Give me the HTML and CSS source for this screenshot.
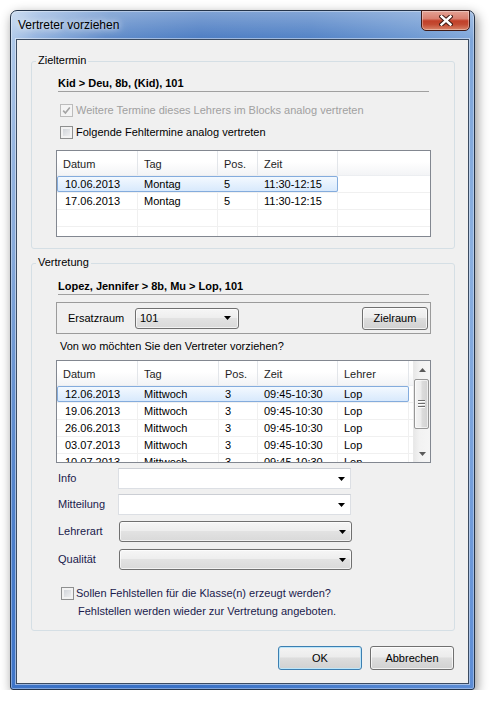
FILE: index.html
```html
<!DOCTYPE html>
<html lang="de">
<head>
<meta charset="utf-8">
<title>Vertreter vorziehen</title>
<link rel="stylesheet" href="styles.css">
</head>
<body>
<div class="window">
  <div class="titlebar">
    <span class="title">Vertreter vorziehen</span>
    <div class="close">
      <svg width="14" height="11" viewBox="0 0 14 11"><path d="M2.5 1.5 L11.5 9.5 M11.5 1.5 L2.5 9.5" stroke="#3b1812" stroke-width="4.4" stroke-linecap="square" fill="none"/><path d="M2.5 1.5 L11.5 9.5 M11.5 1.5 L2.5 9.5" stroke="#fff" stroke-width="2.4" stroke-linecap="square" fill="none"/></svg>
    </div>
  </div>
  <div class="client">
    <fieldset class="group g1">
      <legend>Zieltermin</legend>
      <div class="gbody">
        <div class="heading">Kid &gt; Deu, 8b, (Kid), 101</div>
        <div class="check cb1 disabled"><span class="box"><svg width="9" height="9" viewBox="0 0 9 9"><path d="M1.2 4.6 L3.4 7 L7.8 1.4" stroke="#a4a4a4" stroke-width="1.6" fill="none"/></svg></span><span>Weitere Termine dieses Lehrers im Blocks analog vertreten</span></div>
        <div class="check"><span class="box"></span><span>Folgende Fehltermine analog vertreten</span></div>
        <div class="list l1">
          <div class="lhead"><span class="c1">Datum</span><span class="c2">Tag</span><span class="c3">Pos.</span><span class="c4">Zeit</span><span class="cfill"></span></div>
          <div class="lrow"><div class="cells sel"><span class="c1">10.06.2013</span><span class="c2">Montag</span><span class="c3">5</span><span class="c4">11:30-12:15</span></div><span class="cfill"></span></div>
          <div class="lrow"><div class="cells"><span class="c1">17.06.2013</span><span class="c2">Montag</span><span class="c3">5</span><span class="c4">11:30-12:15</span></div><span class="cfill"></span></div>
          <div class="lrow"><div class="cells"><span class="c1"></span><span class="c2"></span><span class="c3"></span><span class="c4"></span></div><span class="cfill"></span></div>
          <div class="lrow"><div class="cells"><span class="c1"></span><span class="c2"></span><span class="c3"></span><span class="c4"></span></div><span class="cfill"></span></div>
        </div>
      </div>
    </fieldset>

    <fieldset class="group g2">
      <legend>Vertretung</legend>
      <div class="gbody">
        <div class="heading">Lopez, Jennifer &gt; 8b, Mu &gt; Lop, 101</div>
        <div class="roombox">
          <span class="roomlabel">Ersatzraum</span>
          <div class="combo dd room"><span>101</span><svg width="7" height="4" viewBox="0 0 7 4"><path d="M0 0h7L3.5 4z" fill="#000"/></svg></div>
          <div class="btn zielraum">Zielraum</div>
        </div>
        <div class="question">Von wo möchten Sie den Vertreter vorziehen?</div>
        <div class="list l2">
          <div class="lmain">
            <div class="lhead"><span class="c1">Datum</span><span class="c2">Tag</span><span class="c3">Pos.</span><span class="c4">Zeit</span><span class="c5">Lehrer</span><span class="cfill"></span></div>
            <div class="lrow"><div class="cells sel"><span class="c1">12.06.2013</span><span class="c2">Mittwoch</span><span class="c3">3</span><span class="c4">09:45-10:30</span><span class="c5">Lop</span></div><span class="cfill"></span></div>
            <div class="lrow"><div class="cells"><span class="c1">19.06.2013</span><span class="c2">Mittwoch</span><span class="c3">3</span><span class="c4">09:45-10:30</span><span class="c5">Lop</span></div><span class="cfill"></span></div>
            <div class="lrow"><div class="cells"><span class="c1">26.06.2013</span><span class="c2">Mittwoch</span><span class="c3">3</span><span class="c4">09:45-10:30</span><span class="c5">Lop</span></div><span class="cfill"></span></div>
            <div class="lrow"><div class="cells"><span class="c1">03.07.2013</span><span class="c2">Mittwoch</span><span class="c3">3</span><span class="c4">09:45-10:30</span><span class="c5">Lop</span></div><span class="cfill"></span></div>
            <div class="lrow"><div class="cells"><span class="c1">10.07.2013</span><span class="c2">Mittwoch</span><span class="c3">3</span><span class="c4">09:45-10:30</span><span class="c5">Lop</span></div><span class="cfill"></span></div>
          </div>
          <div class="vscroll">
            <div class="sbtn"><svg width="7" height="4" viewBox="0 0 7 4"><path d="M0 4h7L3.5 0z" fill="#5a5a5a"/></svg></div>
            <div class="thumb"><svg width="7" height="8" viewBox="0 0 7 8"><rect y="0" width="7" height="1" fill="#6e6e6e"/><rect y="1" width="7" height="1" fill="#fff"/><rect y="3" width="7" height="1" fill="#6e6e6e"/><rect y="4" width="7" height="1" fill="#fff"/><rect y="6" width="7" height="1" fill="#6e6e6e"/><rect y="7" width="7" height="1" fill="#fff"/></svg></div>
            <div class="strack"></div>
            <div class="sbtn"><svg width="7" height="4" viewBox="0 0 7 4"><path d="M0 0h7L3.5 4z" fill="#5a5a5a"/></svg></div>
          </div>
        </div>
        <div class="field f-info"><span class="flabel">Info</span><div class="combo edit"><span></span><svg width="7" height="4" viewBox="0 0 7 4"><path d="M0 0h7L3.5 4z" fill="#000"/></svg></div></div>
        <div class="field f-mit"><span class="flabel">Mitteilung</span><div class="combo edit"><span></span><svg width="7" height="4" viewBox="0 0 7 4"><path d="M0 0h7L3.5 4z" fill="#000"/></svg></div></div>
        <div class="field f-art"><span class="flabel">Lehrerart</span><div class="combo dd wide"><span></span><svg width="7" height="4" viewBox="0 0 7 4"><path d="M0 0h7L3.5 4z" fill="#000"/></svg></div></div>
        <div class="field f-qual"><span class="flabel">Qualität</span><div class="combo dd wide"><span></span><svg width="7" height="4" viewBox="0 0 7 4"><path d="M0 0h7L3.5 4z" fill="#000"/></svg></div></div>
        <div class="check cb3"><span class="box"></span><span class="navy">Sollen Fehlstellen für die Klasse(n) erzeugt werden?</span></div>
        <div class="note navy">Fehlstellen werden wieder zur Vertretung angeboten.</div>
      </div>
    </fieldset>

    <div class="buttons">
      <div class="btn default">OK</div>
      <div class="btn">Abbrechen</div>
    </div>
  </div>
</div>
</body>
</html>
```
FILE: styles.css
```css
* { box-sizing: border-box; }
html, body { margin: 0; padding: 0; background: #fff; }
body {
  padding: 10px 0 0 10px;
  font-family: "Liberation Sans", Arial, sans-serif;
  font-size: 11px;
  line-height: 13px;
  color: #000;
}

/* window chrome */
.window {
  position: relative;
  width: 465px;
  height: 680px;
  display: flex;
  flex-direction: column;
  padding: 0 5px 5px;
  border: 1px solid #24344a;
  border-radius: 7px 7px 3px 3px;
  background:
    linear-gradient(to bottom, rgba(255,255,255,.30), rgba(255,255,255,0) 30px),
    linear-gradient(to bottom, rgba(45,105,200,0) 35%, rgba(45,105,200,.6) 100%),
    linear-gradient(100deg, #b7cfec 0%, #93b3df 5%, #5d8ac9 17%, #4a7bc2 33%, #4f80c5 52%, #6a96d1 70%, #8aafdf 86%, #a3c1e8 100%);
  box-shadow: inset 0 0 0 1px rgba(255,255,255,.35), 2px 4px 12px rgba(0,0,0,.45);
}
.titlebar {
  flex: none;
  height: 28px;
  display: flex;
  align-items: center;
  padding-left: 2px;
}
.title {
  font-size: 12px;
  color: #000;
  text-shadow: 0 0 6px rgba(255,255,255,.95), 0 0 12px rgba(255,255,255,.75);
}
.close {
  position: absolute;
  top: -1px;
  right: 4px;
  width: 49px;
  height: 21px;
  display: flex;
  align-items: center;
  justify-content: center;
  border: 1px solid #3f1b17;
  border-radius: 0 0 5px 5px;
  background: linear-gradient(#e3a295 0%, #d98070 40%, #c2402a 52%, #c34a32 70%, #d9856a 100%);
  box-shadow: inset 0 0 0 1px rgba(255,255,255,.35);
}

.client {
  flex: 1;
  display: flex;
  flex-direction: column;
  padding: 14px 13px 0 14px;
  background: #f0f0f0;
  border: 1px solid #3b4b61;
  box-shadow: 0 0 0 1px rgba(255,255,255,.45);
}

/* group boxes */
fieldset.group {
  margin: 0;
  padding: 0;
  min-width: 0;
  border: 1px solid #d5dfe5;
  border-radius: 3px;
}
fieldset.group legend {
  margin-left: 4px;
  padding: 0 2px 2px;
  line-height: 13px;
}
fieldset.g2 { margin-top: 7px; }
.gbody { padding: 0 23px 11px 24px; }
.g2 .gbody { padding-bottom: 12px; }

.heading {
  margin: 8px 2px 0;
  padding-bottom: 1px;
  border-bottom: 1px solid #a0a0a0;
  font-weight: bold;
}
.g2 .heading { margin-top: 9px; }

/* checkboxes */
.check {
  display: flex;
  align-items: center;
  height: 22px;
  padding-left: 4px;
}
.cb1 { margin-top: 7px; }
.box {
  flex: none;
  width: 13px;
  height: 13px;
  margin-right: 3px;
  display: flex;
  align-items: center;
  justify-content: center;
  border: 1px solid #8e8f8f;
  background: linear-gradient(135deg, #c9cdd3, #f6f6f6);
  box-shadow: inset 0 0 0 2px #f2f2f2;
}
.check.disabled { color: #a0a0a0; }
.check.disabled .box {
  border-color: #bcbcbc;
  background: #f4f4f4;
  box-shadow: none;
}
.cb3 {
  height: 13px;
  margin-top: 17px;
  padding-left: 5px;
}
.cb3 .box { margin-right: 2px; }
.navy { color: #1a1a4c; }
.note { margin-top: 5px; padding-left: 22px; }

/* list views */
.list {
  border: 1px solid #828790;
  background: #fff;
  overflow: hidden;
}
.l1 { margin-top: 7px; height: 87px; --w2: 80px; --w3: 40px; }
.l2 { margin-top: 7px; height: 103px; display: flex; --w2: 81px; --w3: 39px; }
.lmain { flex: 1; min-width: 0; overflow: hidden; }
.lhead {
  display: flex;
  height: 25px;
  border-bottom: 1px solid #eceef1;
  background: linear-gradient(#ffffff 0%, #ffffff 45%, #f3f4f6 100%);
  color: #1e1e1e;
}
.lhead span {
  flex: none;
  line-height: 22px;
  padding: 2px 0 0 6px;
  border-right: 1px solid #e3e6ea;
  white-space: nowrap;
}
.lhead .cfill { flex: 1; border-right: 0; }
.lrow {
  display: flex;
  height: 17px;
  border-bottom: 1px solid #f0f0f0;
}
.cells { display: flex; flex: none; }
.lrow span {
  flex: none;
  line-height: 17px;
  padding-left: 6px;
  border-right: 1px solid #f0f0f0;
  white-space: nowrap;
  overflow: hidden;
}
.lrow .c1 { padding-left: 8px; }
.lrow .cfill { flex: 1; border-right: 0; }
.cells.sel {
  background: linear-gradient(#f5faff, #d6e8fc);
  box-shadow: inset 0 0 0 1px #84acdd;
  border-radius: 2px;
}
.cells.sel span { border-right-color: transparent; }
.c1 { width: 81px; }
.c2 { width: var(--w2); }
.c3 { width: var(--w3); }
.c4 { width: 80px; }
.c5 { width: 71px; }

/* scrollbar */
.vscroll {
  flex: none;
  width: 17px;
  display: flex;
  flex-direction: column;
  border-left: 1px solid #e9e9e9;
  background: linear-gradient(90deg, #e8e8e8, #f2f2f2 35%, #f5f5f5);
}
.sbtn {
  flex: none;
  height: 17px;
  display: flex;
  align-items: center;
  justify-content: center;
}
.thumb {
  flex: none;
  height: 50px;
  margin: 1px 1px 0 0;
  display: flex;
  align-items: center;
  justify-content: center;
  border: 1px solid #979797;
  border-radius: 2px;
  background: linear-gradient(90deg, #f4f4f4 0%, #ececec 45%, #dcdcdc 55%, #d2d2d2 100%);
  box-shadow: inset 0 0 0 1px rgba(255,255,255,.6);
}
.strack { flex: 1; }

/* room box */
.roombox {
  margin-top: 7px;
  height: 32px;
  display: flex;
  align-items: center;
  padding: 0 2px 0 11px;
  border: 1px solid #9b9b9b;
}
.roomlabel { width: 67px; }
.question { margin-top: 6px; padding-left: 4px; }

/* combos */
.combo {
  flex: none;
  height: 21px;
  width: 233px;
  display: flex;
  align-items: center;
  justify-content: space-between;
  padding: 0 5px 0 4px;
}
.combo.edit {
  background: #fff;
  border: 1px solid #dcdfe4;
  border-top-color: #cbced4;
}
.combo.dd {
  border: 1px solid #707070;
  border-radius: 3px;
  background: linear-gradient(#f6f6f6 0%, #eeeeee 45%, #e2e2e2 50%, #d9d9d9 100%);
  box-shadow: inset 0 0 0 1px rgba(255,255,255,.65);
}
.combo.room { width: 104px; padding-right: 7px; }
.combo.wide { margin-left: 1px; }

.field { display: flex; align-items: center; }
.flabel { width: 62px; padding-left: 2px; color: #1a1a4c; }
.f-info { margin-top: 5px; }
.f-mit { margin-top: 5px; }
.f-art { margin-top: 6px; }
.f-qual { margin-top: 7px; }

/* buttons */
.btn {
  flex: none;
  width: 84px;
  height: 24px;
  display: flex;
  align-items: center;
  justify-content: center;
  border: 1px solid #707070;
  border-radius: 3px;
  background: linear-gradient(#f4f4f4 0%, #ececec 45%, #dddddd 50%, #d1d1d1 100%);
  box-shadow: inset 0 0 0 1px rgba(255,255,255,.7);
  color: #000;
}
.btn.zielraum { width: 66px; height: 23px; margin-left: auto; }
.btn.default {
  border-color: #3c7fb1;
  box-shadow: inset 0 0 0 1px #bde6fa;
}
.buttons {
  display: flex;
  justify-content: flex-end;
  gap: 8px;
  margin-top: 15px;
  padding-right: 1px;
}
```
